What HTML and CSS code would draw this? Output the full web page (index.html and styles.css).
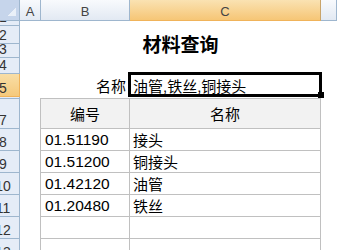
FILE: index.html
```html
<!DOCTYPE html>
<html lang="zh">

<head>
  <meta charset="UTF-8">
  <meta name="viewport" content="width=device-width, initial-scale=1.0">
  <title>材料查询</title>
  <link rel="stylesheet" href="styles.css">
</head>

<body>
  <div class="sheet">
    <div class="col-heads">
      <div class="corner"><span class="corner-tri"></span></div>
      <div class="col-head">A</div>
      <div class="col-head">B</div>
      <div class="col-head selected">C</div>
      <div class="col-head"></div>
    </div>

    <div class="grid">
      <!-- row 1 -->
      <div class="row-head"><span>1</span></div>
      <div></div><div></div><div></div><div></div>

      <!-- rows 2-3: title -->
      <div class="row-head"><span>2</span></div>
      <div></div>
      <div class="title">材料查询</div>
      <div></div>
      <div class="row-head"><span>3</span></div>
      <div></div>
      <div></div>

      <!-- row 4 -->
      <div class="row-head"><span>4</span></div>
      <div></div><div></div><div></div><div></div>

      <!-- row 5: search -->
      <div class="row-head selected"><span>5</span></div>
      <div></div>
      <div class="cell label">名称</div>
      <div class="cell active">油管,铁丝,铜接头<span class="fill-handle"></span></div>
      <div></div>

      <!-- row 6 -->
      <div class="row-head"><span>6</span></div>
      <div></div>
      <div class="top-edge"></div>
      <div class="top-edge"></div>
      <div></div>

      <!-- row 7: table header -->
      <div class="row-head"><span>7</span></div>
      <div></div>
      <div class="cell tb th">编号</div>
      <div class="cell tc th">名称</div>
      <div></div>

      <div class="row-head"><span>8</span></div>
      <div></div>
      <div class="cell tb num">01.51190</div>
      <div class="cell tc">接头</div>
      <div></div>

      <div class="row-head"><span>9</span></div>
      <div></div>
      <div class="cell tb num">01.51200</div>
      <div class="cell tc">铜接头</div>
      <div></div>

      <div class="row-head"><span>10</span></div>
      <div></div>
      <div class="cell tb num">01.42120</div>
      <div class="cell tc">油管</div>
      <div></div>

      <div class="row-head"><span>11</span></div>
      <div></div>
      <div class="cell tb num">01.20480</div>
      <div class="cell tc">铁丝</div>
      <div></div>

      <div class="row-head"><span>12</span></div>
      <div></div>
      <div class="cell tb"></div>
      <div class="cell tc"></div>
      <div></div>

      <div class="row-head"><span>13</span></div>
      <div></div>
      <div class="cell tb"></div>
      <div class="cell tc"></div>
      <div></div>
    </div>
  </div>
</body>

</html>
```

FILE: styles.css
```css
* {
  box-sizing: border-box;
}

body {
  margin: 0;
  padding: 0;
  background: #fff;
  font-family: "Liberation Sans", "Noto Sans CJK SC", sans-serif;
  color: #000;
  overflow: hidden;
}

.sheet {
  width: 337px;
  height: 250px;
  overflow: hidden;
}

/* column letters */
.col-heads {
  display: grid;
  grid-template-columns: 20px 21px 89px 191px 1fr;
  height: 21px;
}

.col-head {
  display: flex;
  justify-content: center;
  align-items: center;
  padding-top: 3px;
  font-size: 13px;
  color: #444;
  background: linear-gradient(to bottom, #f8fafd, #e2e9f3);
  border-right: 1px solid #9eb6ce;
  border-bottom: 1px solid #9eb6ce;
}

.col-head.selected {
  background: linear-gradient(to bottom, #fae2b2, #f6c676);
  border-right-color: #c9a46a;
  border-bottom-color: #f0b35a;
}

.corner {
  display: flex;
  justify-content: flex-end;
  align-items: flex-end;
  padding: 0 3px 4px 0;
  background: #c6d5eb;
  border-right: 1px solid #9eb6ce;
  border-bottom: 1px solid #9eb6ce;
}

.corner-tri {
  width: 9px;
  height: 9px;
  background: linear-gradient(to bottom right, transparent 50%, #eaf0f8 50%);
}

/* cells */
.grid {
  display: grid;
  grid-template-columns: 20px 20px 90px 191px 1fr;
  grid-template-rows: 5px 18px 14px 16px 23px 2px 30px repeat(6, 22px);
}

.row-head {
  display: flex;
  align-items: flex-end;
  overflow: hidden;
  padding-bottom: 1px;
  font-size: 14px;
  line-height: 14px;
  color: #333;
  background: #e5ecf7;
  border-right: 1px solid #9eb6ce;
  border-bottom: 1px solid #9eb6ce;
}

.row-head span {
  flex: none;
  width: 20px;
  margin-left: -7px;
  text-align: center;
}

.row-head.selected {
  background: linear-gradient(to bottom, #f9dea6, #f5c97c);
  border-bottom-color: #f0b35a;
  border-right-color: #f0b35a;
}

.title {
  grid-row: span 2;
  grid-column: span 2;
  display: flex;
  justify-content: center;
  align-items: center;
  padding-top: 2px;
  font-size: 19px;
  font-weight: bold;
}

.cell {
  display: flex;
  align-items: center;
  padding: 0 3px;
  font-size: 15px;
  white-space: nowrap;
}

.num {
  padding-left: 4px;
  font-size: 15.5px;
}

.label {
  justify-content: flex-end;
  padding-right: 4px;
}

.active {
  position: relative;
}

.active::after {
  content: "";
  position: absolute;
  top: -2px;
  left: -2px;
  right: -1px;
  bottom: 0;
  border: 3px solid #000;
}

.fill-handle {
  position: absolute;
  right: -3px;
  bottom: -1px;
  width: 6px;
  height: 6px;
  background: #000;
  z-index: 1;
}

.top-edge {
  border-bottom: 1px solid #c0c0c0;
}

.tb {
  border-left: 1px solid #c0c0c0;
  border-right: 1px solid #c0c0c0;
  border-bottom: 1px solid #c0c0c0;
}

.tc {
  border-right: 1px solid #c0c0c0;
  border-bottom: 1px solid #c0c0c0;
}

.th {
  justify-content: center;
  background: #f2f2f2;
}
```
